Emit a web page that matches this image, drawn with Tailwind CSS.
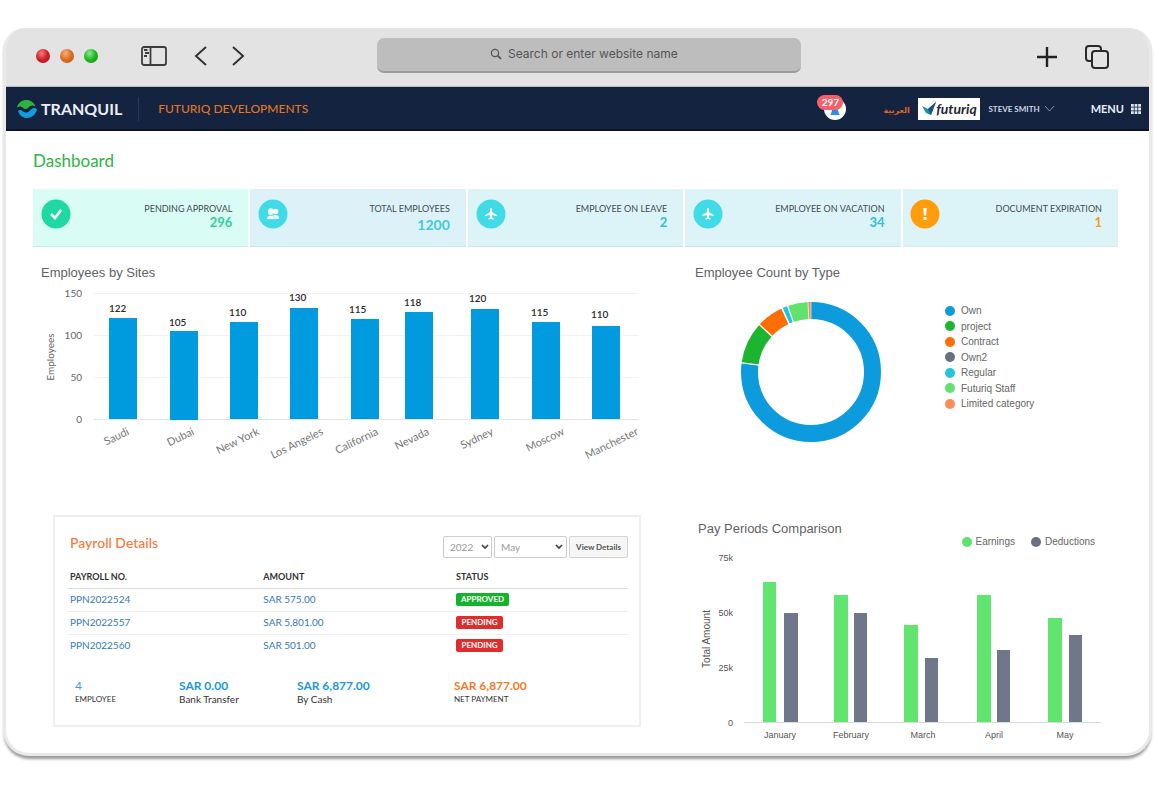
<!DOCTYPE html>
<html lang="en">
<head>
<meta charset="utf-8">
<meta name="viewport" content="width=device-width, initial-scale=1">
<title>Tranquil Dashboard</title>
<script src="https://cdn.jsdelivr.net/npm/@tailwindcss/browser@4"></script>
</head>
<body class="bg-white font-['Lato','Noto_Sans',sans-serif] text-[#444b52]">
<div class="mt-7 mr-1 mb-8 ml-[3px] overflow-hidden rounded-t-[22px] rounded-b-[26px] border-x-[3px] border-b-[3px] border-[#e9e9e9] bg-white shadow-[0_4px_3px_-1px_rgba(0,0,0,0.4)]">

  <!-- Browser toolbar -->
  <div class="grid h-[59px] grid-cols-[371fr_424fr_348fr] items-center border-b border-[#b9bcbc] bg-[#e3e3e3]">
    <div class="flex items-center pb-[2px] pl-[30px]">
      <span class="size-[14px] rounded-full bg-radial-[at_40%_30%] from-[#f08080] via-[#cf1f27] to-[#a8121b]"></span>
      <span class="ml-[10px] size-[14px] rounded-full bg-radial-[at_40%_30%] from-[#f4b183] via-[#dd6b20] to-[#b9540f]"></span>
      <span class="ml-[10px] size-[14px] rounded-full bg-radial-[at_40%_30%] from-[#8fe88f] via-[#1fb71f] to-[#128a12]"></span>
      <button class="ml-[42px]" aria-label="Toggle sidebar">
        <svg class="h-[22px] w-[28px]" viewBox="0 0 28 22" fill="none" stroke="#3c3c3c" stroke-width="1.800"><rect x="2" y="2" width="24" height="18" rx="2"/><path d="M10.500 2v18"/><path d="M4 5h3.500M5 8h4M4 11h3" stroke-width="2"/></svg>
      </button>
      <button class="ml-[26px]" aria-label="Back">
        <svg class="h-5 w-[14px]" viewBox="0 0 14 20" fill="none" stroke="#333" stroke-width="2"><path d="M12 1 2 10l10 9"/></svg>
      </button>
      <button class="ml-[23px]" aria-label="Forward">
        <svg class="h-5 w-[14px]" viewBox="0 0 14 20" fill="none" stroke="#333" stroke-width="2"><path d="m2 1 10 9-10 9"/></svg>
      </button>
    </div>
    <label class="mb-1 flex h-[35px] items-center justify-center gap-[6px] rounded-[7px] border-b-2 border-[#9c9c9c] bg-[#bdbdbd] pr-2">
      <svg class="size-3" viewBox="0 0 12 12" fill="none" stroke="#555" stroke-width="1.300"><circle cx="5" cy="5" r="3.600"/><path d="m7.600 7.600 3.400 3.200" stroke-width="1.800"/></svg>
      <input type="text" aria-label="Search" placeholder="Search or enter website name" class="w-[172px] bg-transparent font-['Inter',sans-serif] text-[12px] outline-none placeholder:text-[#555]">
    </label>
    <div class="flex items-center justify-end gap-[25px] pr-[39px]">
      <button aria-label="New tab"><svg class="size-6" viewBox="0 0 24 24" fill="none" stroke="#222" stroke-width="2.400"><path d="M12 2v20M2 12h20"/></svg></button>
      <button aria-label="Show tabs"><svg class="size-[26px]" viewBox="0 0 26 26" fill="none" stroke="#2a2a2a" stroke-width="2"><path d="M7 17H5a3 3 0 0 1-3-3V5a3 3 0 0 1 3-3h9a3 3 0 0 1 3 3v2"/><rect x="8" y="7" width="16" height="17" rx="3"/></svg></button>
    </div>
  </div>

  <!-- Application bar -->
  <header class="flex h-11 items-center border-b-2 border-[#061329] bg-[#132340] pt-[2px] pr-2 pl-[11px]">
    <a href="#" class="flex items-center gap-1">
      <svg class="size-5" viewBox="0 0 20 20"><path d="M0 8.500C1 3.500 5 1 9.500 1 13.500 1 17 3.500 18.500 7.500 15 5.500 13 7 11.500 8.500S7.500 11 6 9 2.500 7 0 8.500Z" fill="#2bb53c"/><path d="M1 12C3 10.500 4.500 11 6 12.500s5 1.500 7-1 4.500-3.500 7-1.500C19 15.500 15 19 10 19 6 19 2.500 16.500 1 12Z" fill="#139be0"/></svg>
      <span class="text-[16px] leading-5 font-bold text-[#e9eef7]">TRANQUIL</span>
    </a>
    <span class="ml-4 h-6 w-px bg-[#2a3b59]"></span>
    <span class="ml-[19px] text-[12px] font-medium text-[#e2751f]">FUTURIQ DEVELOPMENTS</span>
    <button class="relative ml-auto size-[22px] rounded-full bg-white" aria-label="Notifications">
      <svg class="mx-auto mt-[3px] size-[12px]" viewBox="0 0 12 12"><path d="M1 10c2-1 1-7 5-8 4 1 3 7 5 8Z" fill="#2a8fe0"/></svg>
      <span class="absolute -top-[3px] right-[3px] flex h-[15px] w-[26px] items-center justify-center rounded-full bg-[#f4616a] text-[10px] font-bold text-white">297</span>
    </button>
    <a href="#" lang="ar" class="ml-[37px] w-[25px] pt-1 text-center font-['DejaVu_Sans',sans-serif] text-[8px] font-bold whitespace-nowrap text-[#e2641f]">العربية</a>
    <span class="ml-[10px] flex h-[22px] w-[62px] items-center justify-center bg-white">
      <svg class="h-[14px] w-[14px]" viewBox="0 0 14 14"><path d="M0 4 6 7 14 0 9 13 4 11Z" fill="#1693a3"/><path d="M6 7 14 0 9 13Z" fill="#1b4f8a"/></svg>
      <span class="text-[14px] leading-5 font-bold text-[#23272f] italic">futuriq</span>
    </span>
    <button class="ml-2 flex items-center gap-1 text-[8px] font-bold text-[#cfd6e2]">STEVE SMITH
      <svg class="h-[6px] w-[11px]" viewBox="0 0 11 6" fill="none" stroke="#8593ab"><path d="m1 0 4.500 5L10 0"/></svg>
    </button>
    <button class="ml-9 flex items-center gap-[7px] text-[11px] font-bold text-[#e9eef7]">MENU
      <svg class="size-[10px]" viewBox="0 0 10 10" fill="#dfe5ef"><path d="M0 0h2.800v2.800H0zM3.600 0h2.800v2.800H3.600zM7.200 0H10v2.800H7.200zM0 3.600h2.800v2.800H0zM3.600 3.600h2.800v2.800H3.600zM7.200 3.600H10v2.800H7.200zM0 7.200h2.800V10H0zM3.600 7.200h2.800V10H3.600zM7.200 7.200H10V10H7.200z"/></svg>
    </button>
  </header>

  <main class="pt-[18px] pr-[31px] pb-2 pl-[27px]">
    <h1 class="text-[17px] leading-6 text-[#2eb544]">Dashboard</h1>

    <!-- Summary tiles -->
    <section class="mt-4 grid grid-cols-5 gap-[2px]">
      <article class="flex h-[58px] items-start justify-between border-b border-[#c4eee5] bg-[#d9fdf5] pt-[10px] pr-4 pl-2">
        <svg class="size-[30px]" viewBox="0 0 30 30"><circle cx="15" cy="15" r="14.500" fill="#1fd9a2"/><path d="m10 15 4 4 6-8" fill="none" stroke="#fff" stroke-width="2.600"/></svg>
        <div class="pt-1 text-right"><h2 class="text-[9px] leading-[12px]">PENDING APPROVAL</h2><p class="text-[13px] leading-[14px] font-bold text-[#2fcf9d]">296</p></div>
      </article>
      <article class="flex h-[58px] items-start justify-between border-b border-[#c9e6ec] bg-[#dcf2f8] pt-[10px] pr-4 pl-2">
        <svg class="size-[30px]" viewBox="0 0 30 30"><circle cx="15" cy="15" r="14.500" fill="#40dbe6"/><g fill="#fff"><circle cx="17.500" cy="12.500" r="2.800"/><path d="M14 20v-3c2-1.500 7-1.500 7 2v1z"/><ellipse cx="12.800" cy="12.600" rx="2.800" ry="3.400"/><path d="M8.500 20.300c0-2.600 2-3.300 3-3.800h2.600c1 .5 3.400 1.200 3.400 3.800z" stroke="#40dbe6" stroke-width=".5"/></g></svg>
        <div class="pt-1 text-right"><h2 class="text-[9px] leading-[12px]">TOTAL EMPLOYEES</h2><p class="text-[14px] leading-[20px] font-bold text-[#3fcbd8]">1200</p></div>
      </article>
      <article class="flex h-[58px] items-start justify-between border-b border-[#c9e6ec] bg-[#dcf4f8] pt-[10px] pr-4 pl-2">
        <svg class="size-[30px]" viewBox="0 0 30 30"><circle cx="15" cy="15" r="14.500" fill="#40dbe6"/><path d="M15 9c.8 0 1.100.8 1.100 1.700v2.600l4.700 2.600v1.300l-4.700-1.200v2.500l1.500 1.100v1l-2.600-.6-2.600.6v-1l1.500-1.100V16l-4.700 1.200v-1.300l4.700-2.600v-2.600c0-.9.300-1.700 1.100-1.700z" fill="#fff"/></svg>
        <div class="pt-1 text-right"><h2 class="text-[9px] leading-[12px]">EMPLOYEE ON LEAVE</h2><p class="text-[13px] leading-[14px] font-bold text-[#2fc3d0]">2</p></div>
      </article>
      <article class="flex h-[58px] items-start justify-between border-b border-[#c9e6ec] bg-[#dcf4f8] pt-[10px] pr-4 pl-2">
        <svg class="size-[30px]" viewBox="0 0 30 30"><circle cx="15" cy="15" r="14.500" fill="#40dbe6"/><path d="M15 9c.8 0 1.100.8 1.100 1.700v2.600l4.700 2.600v1.300l-4.700-1.200v2.500l1.500 1.100v1l-2.600-.6-2.600.6v-1l1.500-1.100V16l-4.700 1.200v-1.300l4.700-2.600v-2.600c0-.9.300-1.700 1.100-1.700z" fill="#fff"/></svg>
        <div class="pt-1 text-right"><h2 class="text-[9px] leading-[12px]">EMPLOYEE ON VACATION</h2><p class="text-[13px] leading-[14px] font-bold text-[#2fc3d0]">34</p></div>
      </article>
      <article class="flex h-[58px] items-start justify-between border-b border-[#d6ecf0] bg-[#dcf4f8] pt-[10px] pr-4 pl-[7px]">
        <svg class="size-[30px]" viewBox="0 0 30 30"><circle cx="15" cy="15" r="14.500" fill="#ff9d0a"/><path d="M13.300 9h3.400l-.5 7.500h-2.400zM13.500 18h3v3h-3z" fill="#fff"/></svg>
        <div class="pt-1 text-right"><h2 class="text-[9px] leading-[12px]">DOCUMENT EXPIRATION</h2><p class="text-[13px] leading-[14px] font-bold text-[#f59a23]">1</p></div>
      </article>
    </section>

    <div class="mt-4 grid grid-cols-[628fr_457fr] gap-y-[45px]">
      <!-- Employees by site -->
      <section>
        <h2 class="pl-2 font-['Liberation_Sans',sans-serif] text-[13px] leading-5 text-[#5f6266]">Employees by Sites</h2>
        <svg class="block h-auto w-full font-['Lato',sans-serif]" viewBox="33 283 628 187" role="img" aria-label="Employees by site bar chart">
          <g stroke="#f2f2f2"><path d="M94 293.500H638M94 335.500H638M94 377.500H638"/><path d="M94 419.500H638" stroke="#dfe3ea"/></g>
          <g font-size="10" fill="#666" text-anchor="end"><text x="82" y="297">150</text><text x="82" y="339">100</text><text x="82" y="381">50</text><text x="82" y="423">0</text></g>
          <text transform="translate(54 357) rotate(-90)" font-size="10" fill="#666" text-anchor="middle">Employees</text>
          <g fill="#009ade"><path d="M109 318h28v101h-28zM170 331h28v89h-28zM230 322h28v97h-28zM290 308h28v111h-28zM351 319h28v100h-28zM405 312h28v107h-28zM471 309h28v110h-28zM532 322h28v97h-28zM592 326h28v93h-28z"/></g>
          <g font-size="10" font-weight="600" fill="#2b2b2b"><text x="109" y="312">122</text><text x="169" y="326">105</text><text x="229" y="316">110</text><text x="289" y="301">130</text><text x="349" y="313">115</text><text x="404" y="306">118</text><text x="469" y="302">120</text><text x="531" y="316">115</text><text x="591" y="318">110</text></g>
          <g font-size="11" fill="#777" text-anchor="end">
            <text transform="translate(130 434) rotate(-26)">Saudi</text><text transform="translate(195 434) rotate(-26)">Dubai</text><text transform="translate(260 434) rotate(-26)">New York</text><text transform="translate(324 434) rotate(-26)">Los Angeles</text><text transform="translate(379 434) rotate(-26)">California</text><text transform="translate(430 434) rotate(-26)">Nevada</text><text transform="translate(494 434) rotate(-26)">Sydney</text><text transform="translate(565 434) rotate(-26)">Moscow</text><text transform="translate(639 434) rotate(-26)">Manchester</text>
          </g>
        </svg>
      </section>

      <!-- Employee count by type -->
      <section class="font-['Liberation_Sans',sans-serif]">
        <h2 class="pl-[34px] text-[13px] leading-5 text-[#5f6266]">Employee Count by Type</h2>
        <div class="mt-[18px] flex items-start gap-[63px] pl-[79px]">
          <svg class="size-[142px] shrink-0" viewBox="-71 -71 142 142" role="img" aria-label="Employee count by type donut chart">
            <g transform="rotate(-90)" fill="none" stroke-width="17">
              <circle r="61.500" pathLength="360" stroke="#0c9bdc" stroke-dasharray="277.500 360"/>
              <circle r="61.500" pathLength="360" stroke="#1bb530" stroke-dasharray="35 360" stroke-dashoffset="-277.500"/>
              <circle r="61.500" pathLength="360" stroke="#ff6d05" stroke-dasharray="22.500 360" stroke-dashoffset="-312.500"/>
              <circle r="61.500" pathLength="360" stroke="#22c5dd" stroke-dasharray="4.500 360" stroke-dashoffset="-336"/>
              <circle r="61.500" pathLength="360" stroke="#5fe36c" stroke-dasharray="17 360" stroke-dashoffset="-340.500"/>
              <circle r="61.500" pathLength="360" stroke="#fb8c55" stroke-dasharray="2.500 360" stroke-dashoffset="-357.500"/>
            </g>
            <g stroke="#fff" stroke-width="1.300"><path d="M0-50v-22" stroke-width=".6"/><path d="M0-50v-22" transform="rotate(277.500)"/><path d="M0-50v-22" transform="rotate(312.500)"/><path d="M0-50v-22" transform="rotate(335.500)"/><path d="M0-50v-22" transform="rotate(340.500)"/><path d="M0-50v-22" transform="rotate(357.500)" stroke-width=".6"/></g>
          </svg>
          <ul class="mt-[2px] flex h-[108px] flex-col justify-between text-[10px] leading-[15px] text-[#666]">
            <li class="flex items-center gap-[6px]"><span class="size-[10px] rounded-full bg-[#0c9bdc]"></span>Own</li>
            <li class="flex items-center gap-[6px]"><span class="size-[10px] rounded-full bg-[#1bb530]"></span>project</li>
            <li class="flex items-center gap-[6px]"><span class="size-[10px] rounded-full bg-[#ff6d05]"></span>Contract</li>
            <li class="flex items-center gap-[6px]"><span class="size-[10px] rounded-full bg-[#687082]"></span>Own2</li>
            <li class="flex items-center gap-[6px]"><span class="size-[10px] rounded-full bg-[#22c5dd]"></span>Regular</li>
            <li class="flex items-center gap-[6px]"><span class="size-[10px] rounded-full bg-[#5fe36c]"></span>Futuriq Staff</li>
            <li class="flex items-center gap-[6px]"><span class="size-[10px] rounded-full bg-[#fb8c55]"></span>Limited category</li>
          </ul>
        </div>
      </section>

      <!-- Payroll -->
      <section class="mr-5 ml-5 self-start border-2 border-[#efefef] pt-[19px] pr-[11px] pb-[19px] pl-3">
        <div class="flex items-start justify-between pl-[3px]">
          <h2 class="text-[14px] leading-[14px] font-medium text-[#f47a3a]">Payroll Details</h2>
          <form class="flex gap-[2px]">
            <span class="relative flex"><select aria-label="Year" class="h-[22px] w-[49px] appearance-none rounded-[2px] border border-[#ccc] bg-white pl-[6px] text-[10px] text-[#999]"><option>2022</option></select><svg class="pointer-events-none absolute top-2 right-[3px] h-[6px] w-2" viewBox="0 0 8 6" fill="none" stroke="#444" stroke-width="1.700"><path d="m1 1 3 3 3-3"/></svg></span>
            <span class="relative flex"><select aria-label="Month" class="h-[22px] w-[73px] appearance-none rounded-[2px] border border-[#ccc] bg-white pl-[6px] text-[10px] text-[#999]"><option>May</option></select><svg class="pointer-events-none absolute top-2 right-1 h-[6px] w-2" viewBox="0 0 8 6" fill="none" stroke="#444" stroke-width="1.700"><path d="m1 1 3 3 3-3"/></svg></span>
            <button type="button" class="h-[22px] w-[59px] rounded-[2px] border border-[#d4d4d4] bg-[#f6f6f6] text-[8px] font-bold whitespace-nowrap text-[#555]">View Details</button>
          </form>
        </div>
        <table class="mt-[7px] w-full table-fixed text-left text-[10px] leading-[13px]">
          <colgroup><col class="w-[35%]"><col class="w-[34%]"><col></colgroup>
          <thead><tr class="h-[23px] border-b border-[#ddd] text-[9px] text-[#333]"><th class="pl-[3px]">PAYROLL NO.</th><th>AMOUNT</th><th class="pl-[2px]">STATUS</th></tr></thead>
          <tbody class="text-[#337ab7]">
            <tr class="h-[23px] border-b border-[#eee]"><td class="pl-[3px]"><a href="#">PPN2022524</a></td><td>SAR 575.00</td><td class="pl-[2px]"><span class="block w-[53px] rounded-[2px] bg-[#13b32b] text-center text-[8px] font-bold text-white">APPROVED</span></td></tr>
            <tr class="h-[23px] border-b border-[#eee]"><td class="pl-[3px]"><a href="#">PPN2022557</a></td><td>SAR 5,801.00</td><td class="pl-[2px]"><span class="block w-[47px] rounded-[2px] bg-[#e02c2c] text-center text-[8px] font-bold text-white">PENDING</span></td></tr>
            <tr class="h-[23px]"><td class="pl-[3px]"><a href="#">PPN2022560</a></td><td>SAR 501.00</td><td class="pl-[2px]"><span class="block w-[47px] rounded-[2px] bg-[#e02c2c] text-center text-[8px] font-bold text-white">PENDING</span></td></tr>
          </tbody>
        </table>
        <dl class="mt-[22px] grid grid-cols-[104fr_118fr_157fr_174fr] pl-2 text-[#333]">
          <div class="flex flex-col-reverse"><dt class="text-[8px] leading-[13px]">EMPLOYEE</dt><dd class="text-[12px] leading-[14px] text-[#3a9fe6]">4</dd></div>
          <div class="flex flex-col-reverse"><dt class="text-[10px] leading-[13px]">Bank Transfer</dt><dd class="text-[12px] leading-[14px] font-bold text-[#2097e0]">SAR 0.00</dd></div>
          <div class="flex flex-col-reverse"><dt class="text-[10px] leading-[13px]">By Cash</dt><dd class="text-[12px] leading-[14px] font-bold text-[#2097e0]">SAR 6,877.00</dd></div>
          <div class="flex flex-col-reverse"><dt class="text-[8px] leading-[13px]">NET PAYMENT</dt><dd class="text-[12px] leading-[14px] font-bold text-[#f47a2a]">SAR 6,877.00</dd></div>
        </dl>
      </section>

      <!-- Pay periods -->
      <section class="pt-1 font-['Liberation_Sans',sans-serif]">
        <h2 class="pl-[37px] text-[13px] leading-5 text-[#5f6266]">Pay Periods Comparison</h2>
        <ul class="-mt-1 flex justify-end gap-4 pr-[23px] text-[10px] leading-[14px] text-[#666]">
          <li class="flex items-center gap-1"><span class="size-[10px] rounded-full bg-[#5fe36c]"></span>Earnings</li>
          <li class="flex items-center gap-1"><span class="size-[10px] rounded-full bg-[#687082]"></span>Deductions</li>
        </ul>
        <svg class="block h-auto w-full" viewBox="661 549 457 196" role="img" aria-label="Pay periods comparison bar chart">
          <g font-size="9" fill="#555" text-anchor="end"><text x="733" y="561">75k</text><text x="733" y="616">50k</text><text x="733" y="671">25k</text><text x="733" y="726">0</text></g>
          <text transform="translate(710 639) rotate(-90)" font-size="10" fill="#555" text-anchor="middle">Total Amount</text>
          <path d="M744 722.500H1101" stroke="#d5dae0"/>
          <path d="M763 582h13v140h-13zM834 595h14v127h-14zM904 625h14v97h-14zM977 595h14v127h-14zM1048 618h14v104h-14z" fill="#62e56e"/>
          <path d="M784 613h14v109h-14zM854 613h13v109h-13zM925 658h13v64h-13zM997 650h13v72h-13zM1069 635h13v87h-13z" fill="#70778a"/>
          <g font-size="9" fill="#555" text-anchor="middle"><text x="780" y="738">January</text><text x="851" y="738">February</text><text x="923" y="738">March</text><text x="994" y="738">April</text><text x="1065" y="738">May</text></g>
        </svg>
      </section>
    </div>
  </main>
</div>
</body>
</html>
